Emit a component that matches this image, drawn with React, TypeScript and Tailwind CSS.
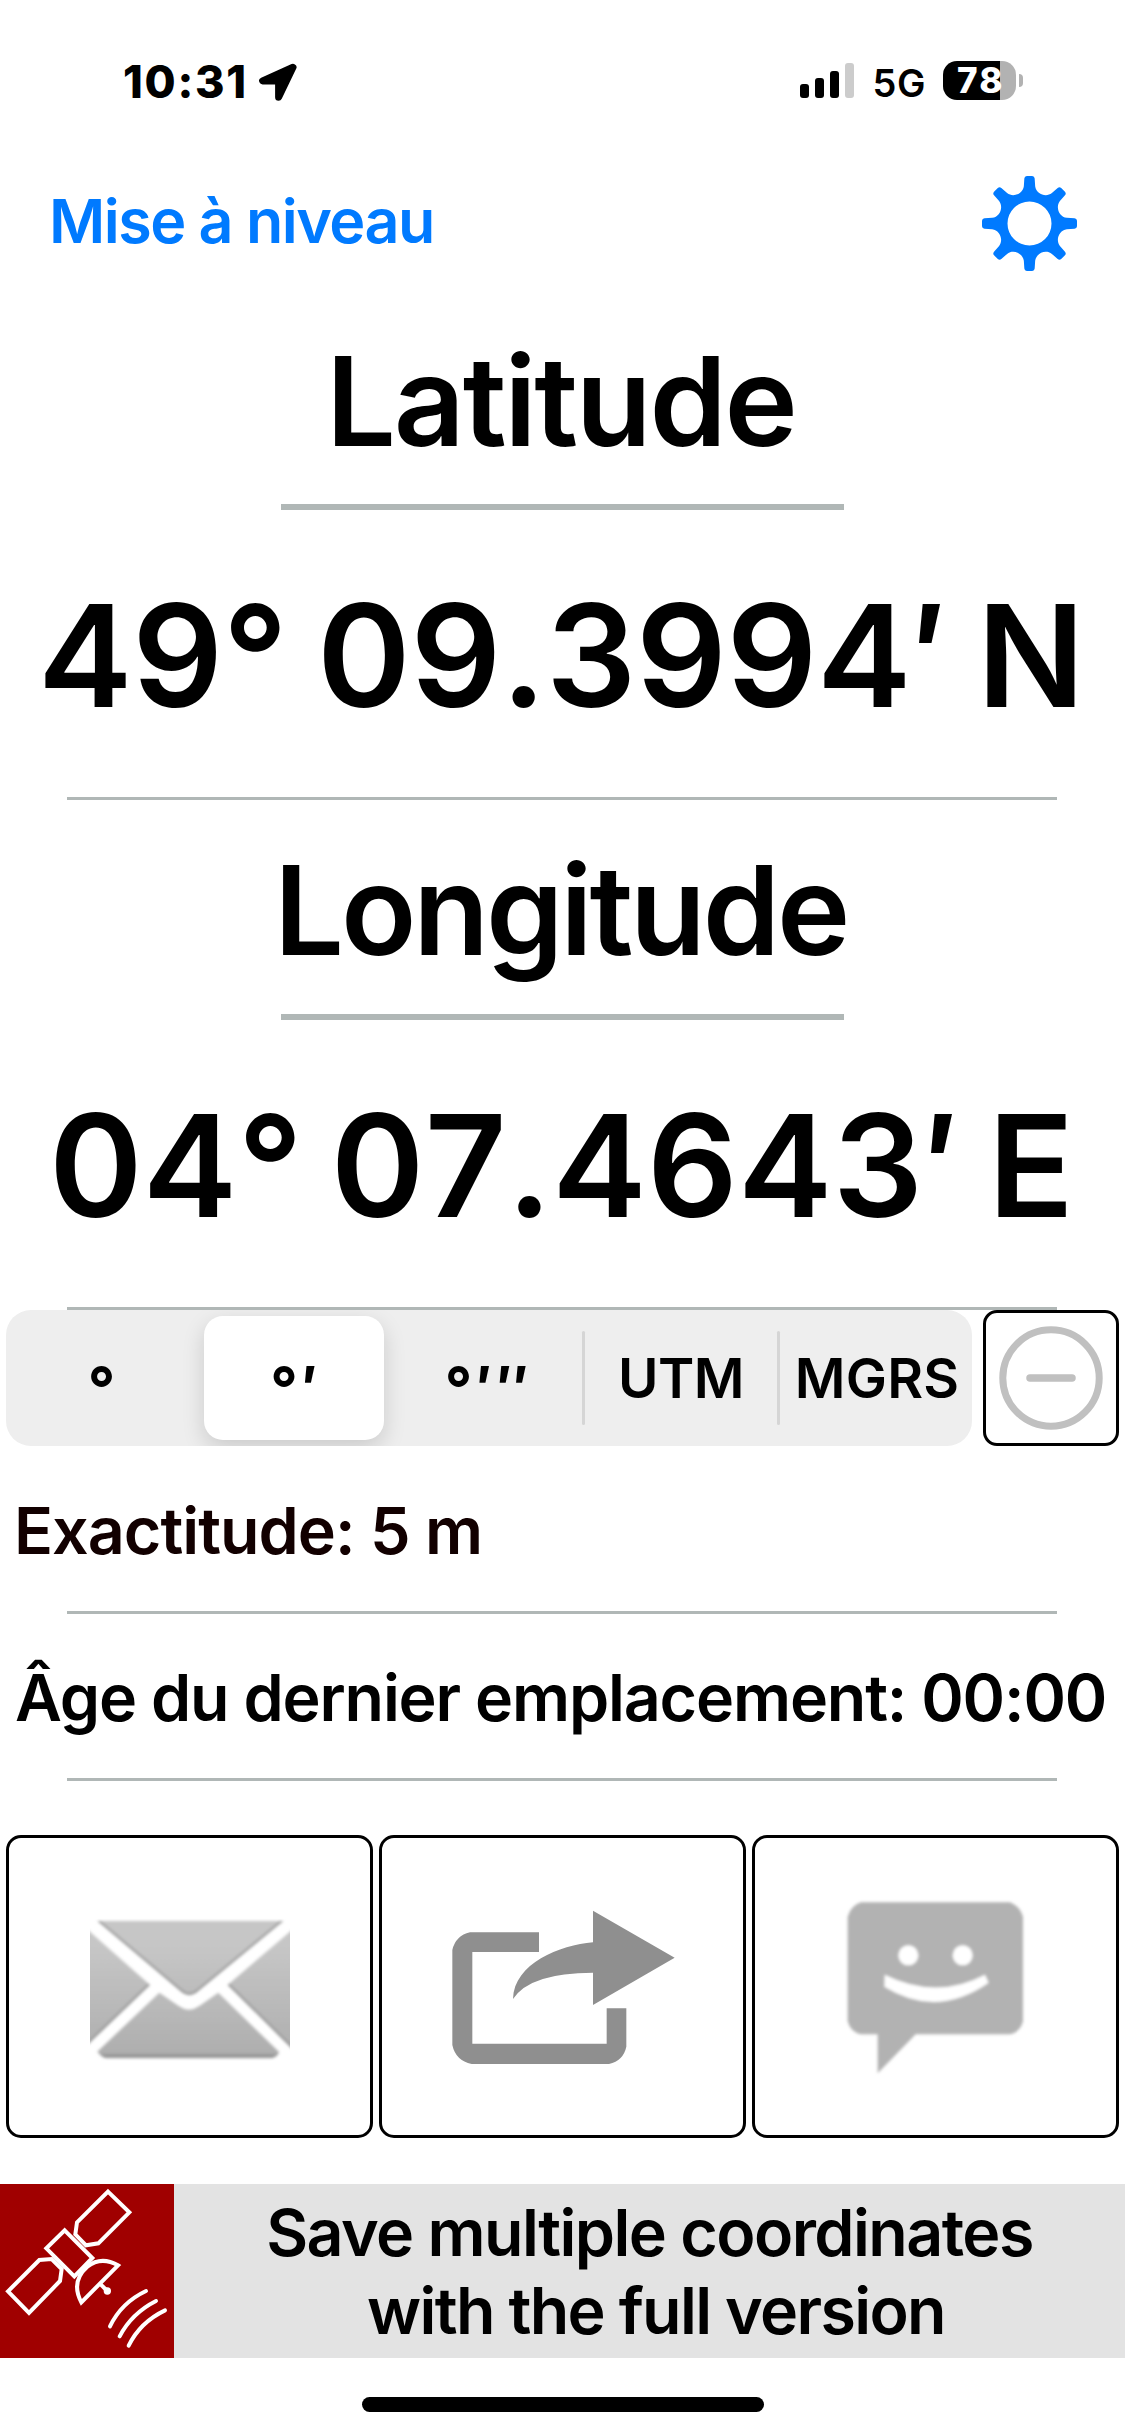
import type { ReactNode } from "react";

const GEAR_TEETH = 8;

function gearPath() {
  const rotate = (x: number, y: number, turn: number) => {
    const a = (turn * Math.PI) / 180;
    const px = x * Math.cos(a) - y * Math.sin(a);
    const py = x * Math.sin(a) + y * Math.cos(a);
    return `${px.toFixed(2)},${py.toFixed(2)}`;
  };
  let d = `M${rotate(-17, -112, 0)}`;
  for (let i = 0; i < GEAR_TEETH; i++) {
    const t = (i * 360) / GEAR_TEETH;
    const n = t + 360 / GEAR_TEETH;
    d += `L${rotate(-15.5, -135, t)}Q${rotate(-15, -142, t)} ${rotate(-8, -142.5, t)}`;
    d += `L${rotate(8, -142.5, t)}Q${rotate(15, -142, t)} ${rotate(15.5, -135, t)}`;
    d += `L${rotate(17, -112, t)}C${rotate(20, -89, t)} ${rotate(-20, -89, n)} ${rotate(-17, -112, n)}`;
  }
  return `${d}ZM66,0A66,66 0 1 0 -66,0A66,66 0 1 0 66,0Z`;
}

function StatusBar() {
  return (
    <div className="flex h-[161px] items-center pl-[123px] pr-[102px]">
      <span className="pt-[2px] text-[45px] leading-none font-extrabold tracking-[1.7px]">10:31</span>
      <svg className="mt-[3px] ml-[10px] h-[39px] w-[39px]" viewBox="257 63 39 39">
        <path
          d="M292 67.3L261.6 80.9H277.6V97.2Z"
          fill="#000"
          stroke="#000"
          strokeWidth="7"
          strokeLinejoin="round"
        />
      </svg>
      <div className="ml-auto flex items-center">
        <div className="flex h-[35px] items-end gap-[5.5px]">
          <div className="h-[14px] w-[9.5px] rounded-[3px] bg-black" />
          <div className="h-5 w-[9.5px] rounded-[3px] bg-black" />
          <div className="h-[27px] w-[9.5px] rounded-[3px] bg-black" />
          <div className="h-[35px] w-[9.5px] rounded-[3px] bg-[#cccccc]" />
        </div>
        <span className="ml-[18px] pt-[4px] text-[38px] leading-none font-semibold tracking-[0.6px]">5G</span>
        <div className="ml-[17px] flex h-[39px] w-[73px] items-center rounded-[14px] bg-[linear-gradient(90deg,#000_57px,#b2b2b2_57px)] pl-[14px]">
          <span className="text-[35px] leading-[39px] font-extrabold tracking-[2.2px] text-white">78</span>
        </div>
        <div className="ml-[3px] h-[13px] w-1 rounded-r-full bg-[#b2b2b2]" />
      </div>
    </div>
  );
}

function Rule({ thick = false }: { thick?: boolean }) {
  return (
    <div
      className={
        thick ? "mx-auto h-[6px] w-[563px] bg-[#b0b7b6]" : "ml-[67px] h-[3px] w-[990px] bg-[#b0b7b6]"
      }
    />
  );
}

function Segment({ children, className }: { children: ReactNode; className: string }) {
  return <div className={`flex shrink-0 items-center justify-center whitespace-nowrap ${className}`}>{children}</div>;
}

function FormatPicker() {
  const symbol = "pt-5 text-[60px] leading-none font-bold [word-spacing:-10.5px]";
  return (
    <div className="flex h-[136px] justify-between pr-[6px] pl-[6px]">
      <div className="flex w-[966px] items-center overflow-hidden rounded-[25px] bg-[#eeeeee]">
        <Segment className="h-full w-[191px]">
          <span className={symbol}>°</span>
        </Segment>
        <Segment className="ml-[7px] h-[124px] w-[180px] rounded-[19px] bg-white shadow-[0_8px_22px_rgba(0,0,0,0.15)]">
          <span className={symbol}>° ′</span>
        </Segment>
        <Segment className="h-full w-[198px] pl-[8px]">
          <span className={symbol}>° ′ ″</span>
        </Segment>
        <div className="h-[94px] w-[3px] shrink-0 rounded-full bg-[#d5d5d5]" />
        <Segment className="h-full w-[192px] text-[55px] leading-none tracking-[-0.5px]">UTM</Segment>
        <div className="h-[94px] w-[3px] shrink-0 rounded-full bg-[#d5d5d5]" />
        <Segment className="h-full w-[192px] pl-[2px] text-[55px] leading-none tracking-[0.23px]">MGRS</Segment>
      </div>
      <button className="flex w-[136px] items-center justify-center rounded-[14px] border-[3px] border-black bg-white">
        <svg className="h-[104px] w-[104px]" viewBox="0 0 104 104" fill="none" stroke="#c0c0c0">
          <circle cx="52" cy="52" r="48.2" strokeWidth="7" />
          <path d="M31 52H73" strokeWidth="7.5" strokeLinecap="round" />
        </svg>
      </button>
    </div>
  );
}

function ActionCard({ children }: { children: ReactNode }) {
  return <button className="h-[303px] rounded-[15px] border-[3px] border-black bg-white">{children}</button>;
}

function MailIcon() {
  return (
    <svg className="block h-full w-full" viewBox="27 54 1083 891">
      <defs>
        <linearGradient id="mail" gradientUnits="userSpaceOnUse" x1="0" y1="380" x2="0" y2="715">
          <stop offset="0" stopColor="#c6c6c6" />
          <stop offset="1" stopColor="#adadad" />
        </linearGradient>
        <filter id="soft" x="-5%" y="-5%" width="110%" height="110%">
          <feGaussianBlur stdDeviation="4" />
        </filter>
        <clipPath id="mailBox">
          <rect x="270" y="296" width="600" height="428" />
        </clipPath>
        <clipPath id="mailParts">
          <path d="M292 303H850L594 514Q568 537 542 514Z" />
          <path d="M255 322L450 495L255 682Z" />
          <path d="M885 322L683 495L885 695Z" />
          <path d="M478 518L536 558Q567 580 598 558L655 518L838 697Q828 715 808 715H322Q305 712 292 695Z" />
        </clipPath>
      </defs>
      <g clipPath="url(#mailBox)">
        <g filter="url(#soft)">
          <g clipPath="url(#mailParts)">
            <rect x="240" y="290" width="660" height="440" fill="url(#mail)" />
            <g fill="none" stroke="#8c8c8c" strokeWidth="14" strokeOpacity="0.65">
              <path d="M292 303L542 514Q568 537 594 514L850 303" />
              <path d="M450 495L255 682" />
              <path d="M683 495L885 695" />
              <path d="M292 713H838" strokeWidth="22" />
            </g>
          </g>
        </g>
      </g>
    </svg>
  );
}

function ShareIcon() {
  return (
    <svg className="block h-full w-full" viewBox="36 54 1083 891" fill="#8f8f8f">
      <path d="M507 337V396H307V671H710V565H769V680Q760 722 717 732H305Q257 722 247 675V390Q257 347 300 337Z" />
      <path d="M669 272L914 413L669 555V458Q480 458 429 537C432 430 570 375 669 367Z" />
    </svg>
  );
}

function MessageIcon() {
  return (
    <svg className="block h-full w-full" viewBox="32 54 1083 891">
      <g filter="url(#soft)">
        <path
          d="M350 247H797Q828 260 836 290V604Q828 636 797 643H514L400 760V643H350Q318 636 310 604V290Q320 256 350 247Z"
          fill="#b2b2b2"
        />
        <circle cx="492" cy="406" r="30" fill="#fff" />
        <circle cx="655" cy="406" r="30" fill="#fff" />
        <path d="M421 464Q577 541 722 464L733 488Q577 597 420 500Z" fill="#fff" />
      </g>
    </svg>
  );
}

function SatelliteIcon() {
  return (
    <svg
      className="h-[174px] w-[174px] shrink-0 bg-[#a00000]"
      viewBox="0 42 522 522"
      fill="none"
      stroke="#fff"
      strokeWidth="12"
    >
      <path d="M324 65L388 127L295 220L258 226L226 193L231 157Z" />
      <path d="M194 181L277 264L223 319L139 235Z" />
      <path d="M24 364L118 270L155 267L185 297L180 333L87 429Z" />
      <path d="M354 286L244 397C222 355 230 318 262 290C290 268 322 268 354 286Z" />
      <path d="M302 343L322 363" />
      <circle cx="322" cy="363" r="11" fill="#fff" stroke="none" />
      <g strokeLinecap="round">
        <path d="M438 363Q364 398 330 469" />
        <path d="M468 393Q395 430 359 499" />
        <path d="M495 421Q420 457 386 527" />
      </g>
    </svg>
  );
}

export default function App() {
  return (
    <div className="flex h-[2436px] w-[1125px] flex-col overflow-hidden bg-white font-['Inter',sans-serif] font-semibold text-black">
      <StatusBar />
      <header className="flex h-[117px] items-center justify-between pt-[3px] pr-[48px] pl-[49px]">
        <a className="text-[61px] leading-none tracking-[-1.52px] text-[#007aff]">Mise à niveau</a>
        <svg className="mt-[5px] h-[95px] w-[95px]" viewBox="-142.5 -142.5 285 285">
          <path d={gearPath()} fill="#007aff" fillRule="evenodd" />
        </svg>
      </header>

      <h2 className="flex h-[226px] items-center pt-[19px] pl-[326px] text-[124px] leading-none tracking-[-2.3px]">
        Latitude
      </h2>
      <Rule thick />
      <p className="flex h-[287px] items-center pt-[3px] pl-[38px] text-[142px] leading-none tracking-[-0.3px] whitespace-nowrap [font-kerning:none] [word-spacing:-6px]">
        49° 09.3994′ N
      </p>
      <Rule />
      <h2 className="flex h-[214px] items-center pt-[6px] pl-[274px] text-[124px] leading-none tracking-[-3.2px]">
        Longitude
      </h2>
      <Rule thick />
      <p className="flex h-[287px] items-center pt-[2px] pl-[49px] text-[142px] leading-none tracking-[0.2px] whitespace-nowrap [font-kerning:none] [word-spacing:-8px]">
        04° 07.4643′ E
      </p>
      <Rule />

      <FormatPicker />

      <p className="flex h-[165px] items-center pt-[6px] pl-[14px] text-[64.5px] leading-none tracking-[-0.95px] text-[#120000]">
        Exactitude: 5 m
      </p>
      <Rule />
      <p className="flex h-[164px] items-center pt-[5px] pl-[15px] text-[64.5px] leading-none tracking-[-1.17px] whitespace-nowrap">
        Âge du dernier emplacement: 00:00
      </p>
      <Rule />

      <div className="mt-[54px] grid grid-cols-3 gap-[6px] px-[6px]">
        <ActionCard>
          <MailIcon />
        </ActionCard>
        <ActionCard>
          <ShareIcon />
        </ActionCard>
        <ActionCard>
          <MessageIcon />
        </ActionCard>
      </div>

      <div className="mt-[46px] flex h-[174px] bg-[#e3e3e3]">
        <SatelliteIcon />
        <div className="flex flex-1 flex-col items-center pt-[10px] text-[64.5px] leading-[78px] whitespace-nowrap">
          <span className="tracking-[-1.54px]">Save multiple coordinates</span>
          <span className="pl-[13px] tracking-[-1.65px]">with the full version</span>
        </div>
      </div>

      <div className="mt-[39px] ml-[362px] h-[15px] w-[402px] rounded-full bg-black" />
    </div>
  );
}
